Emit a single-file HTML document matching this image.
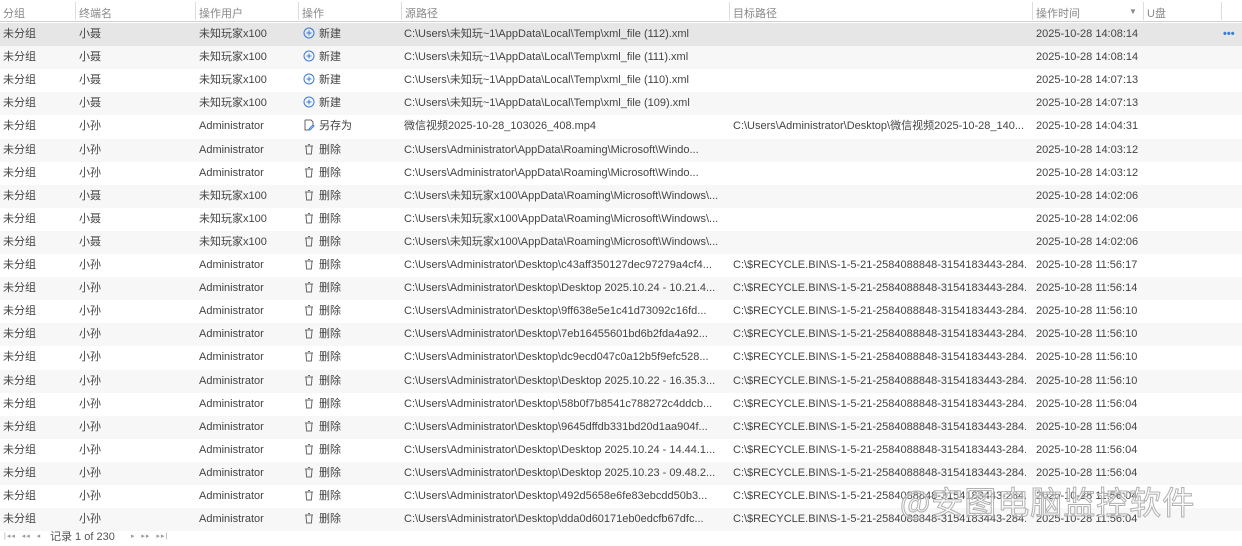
<!DOCTYPE html>
<html><head><meta charset="utf-8"><style>
*{margin:0;padding:0;box-sizing:border-box}
body{width:1242px;height:546px;overflow:hidden;background:#fff;font-family:"Liberation Sans","Noto Sans CJK SC",sans-serif;font-size:11px;color:#444;position:relative}
.hdr{position:absolute;left:0;top:0;width:1242px;height:22px;border-bottom:1px solid #cfcfcf;background:#fff;color:#888}
.hdr span{position:absolute;top:5px}
.sep{position:absolute;top:2px;width:1px;height:18px;background:#ddd}
.row{position:absolute;left:0;width:1242px;height:23px;line-height:23px}
.row span{position:absolute;white-space:nowrap;overflow:hidden}
.alt{background:#f7f7f7}
.sel{background:#e6e6e6}
.c0{left:3px}.c1{left:79px}.c2{left:199px}.c3{left:303px}.c4{left:404px;max-width:322px}.c5{left:733px;max-width:293px}.c6{left:1036px}
.ic{display:inline-block;width:12px;height:12px;vertical-align:-2px;margin-right:4px}
.ft{position:absolute;left:0;top:528px;height:18px;width:1242px;line-height:18px;color:#999;font-size:7px}
.wm{position:absolute;left:900px;top:478px;font-size:32px;color:rgba(255,255,255,.5);-webkit-text-stroke:1px #b0b0b0;letter-spacing:1px;font-family:"Noto Sans CJK SC",sans-serif}
</style></head><body>
<div class="hdr">
<span style="left:3px">分组</span><div class="sep" style="left:75px"></div>
<span style="left:79px">终端名</span><div class="sep" style="left:195px"></div>
<span style="left:199px">操作用户</span><div class="sep" style="left:298px"></div>
<span style="left:302px">操作</span><div class="sep" style="left:401px"></div>
<span style="left:405px">源路径</span><div class="sep" style="left:729px"></div>
<span style="left:733px">目标路径</span><div class="sep" style="left:1032px"></div>
<span style="left:1036px">操作时间</span><span style="left:1129px;font-size:8px;top:7px">▼</span><div class="sep" style="left:1143px"></div>
<span style="left:1147px">U盘</span><div class="sep" style="left:1221px"></div>
</div>
<div id="rows"></div>
<div class="ft"><span style="position:absolute;left:4px;letter-spacing:1px">|◂◂ &nbsp;◂◂ &nbsp;◂</span><span style="position:absolute;left:50px;font-size:11px;color:#555">记录 1 of 230</span><span style="position:absolute;left:131px;letter-spacing:1px">▸ &nbsp;▸▸ &nbsp;▸▸|</span></div>
<div class="wm">@安图电脑监控软件</div>
<script>
var plus='<svg class="ic" viewBox="0 0 12 12"><circle cx="6" cy="6" r="5" fill="none" stroke="#3a7bd5"/><path d="M6 3.5v5M3.5 6h5" stroke="#3a7bd5"/></svg>';
var save='<svg class="ic" viewBox="0 0 12 12"><path d="M2 1h6l2 2v4M2 1v10h5" fill="none" stroke="#666"/><path d="M6 10l4-4 1 1-4 4H6z" fill="none" stroke="#3a7bd5"/></svg>';
var del='<svg class="ic" viewBox="0 0 12 12"><path d="M2 3h8M5 1.5h2M3 3l.6 8h4.8L9 3" fill="none" stroke="#666"/></svg>';
var R=[];
function r(a,b,c,op,s,d,t){R.push([a,b,c,op,s,d,t]);}
var N='未知玩家x100',A='Administrator',RB='C:\\$RECYCLE.BIN\\S-1-5-21-2584088848-3154183443-284...';
r('小聂',N,'n','C:\\Users\\未知玩~1\\AppData\\Local\\Temp\\xml_file (112).xml','','2025-10-28 14:08:14');
r('小聂',N,'n','C:\\Users\\未知玩~1\\AppData\\Local\\Temp\\xml_file (111).xml','','2025-10-28 14:08:14');
r('小聂',N,'n','C:\\Users\\未知玩~1\\AppData\\Local\\Temp\\xml_file (110).xml','','2025-10-28 14:07:13');
r('小聂',N,'n','C:\\Users\\未知玩~1\\AppData\\Local\\Temp\\xml_file (109).xml','','2025-10-28 14:07:13');
r('小孙',A,'s','微信视频2025-10-28_103026_408.mp4','C:\\Users\\Administrator\\Desktop\\微信视频2025-10-28_140...','2025-10-28 14:04:31');
r('小孙',A,'d','C:\\Users\\Administrator\\AppData\\Roaming\\Microsoft\\Windo...','','2025-10-28 14:03:12');
r('小孙',A,'d','C:\\Users\\Administrator\\AppData\\Roaming\\Microsoft\\Windo...','','2025-10-28 14:03:12');
r('小聂',N,'d','C:\\Users\\未知玩家x100\\AppData\\Roaming\\Microsoft\\Windows\\...','','2025-10-28 14:02:06');
r('小聂',N,'d','C:\\Users\\未知玩家x100\\AppData\\Roaming\\Microsoft\\Windows\\...','','2025-10-28 14:02:06');
r('小聂',N,'d','C:\\Users\\未知玩家x100\\AppData\\Roaming\\Microsoft\\Windows\\...','','2025-10-28 14:02:06');
var D=[['c43aff350127dec97279a4cf4...','11:56:17'],['Desktop 2025.10.24 - 10.21.4...','11:56:14'],['9ff638e5e1c41d73092c16fd...','11:56:10'],['7eb16455601bd6b2fda4a92...','11:56:10'],['dc9ecd047c0a12b5f9efc528...','11:56:10'],['Desktop 2025.10.22 - 16.35.3...','11:56:10'],['58b0f7b8541c788272c4ddcb...','11:56:04'],['9645dffdb331bd20d1aa904f...','11:56:04'],['Desktop 2025.10.24 - 14.44.1...','11:56:04'],['Desktop 2025.10.23 - 09.48.2...','11:56:04'],['492d5658e6fe83ebcdd50b3...','11:56:04'],['dda0d60171eb0edcfb67dfc...','11:56:04']];
D.forEach(function(x){r('小孙',A,'d','C:\\Users\\Administrator\\Desktop\\'+x[0],RB,'2025-10-28 '+x[1]);});
var h='';
R.forEach(function(x,i){
var cls=i==0?'sel':(i%2==1?'alt':'');
var ic=x[2]=='n'?plus+'新建':x[2]=='s'?save+'另存为':del+'删除';
h+='<div class="row '+cls+'" style="top:'+(23+i*23.1)+'px"><span class="c0">未分组</span><span class="c1">'+x[0]+'</span><span class="c2">'+x[1]+'</span><span class="c3">'+ic+'</span><span class="c4">'+x[3]+'</span><span class="c5">'+x[4]+'</span><span class="c6">'+x[5]+'</span>'+(i==0?'<span style="left:1223px;color:#3a7bd5;font-weight:bold">•••</span>':'')+'</div>';
});
document.getElementById('rows').innerHTML=h;
</script>
</body></html>
